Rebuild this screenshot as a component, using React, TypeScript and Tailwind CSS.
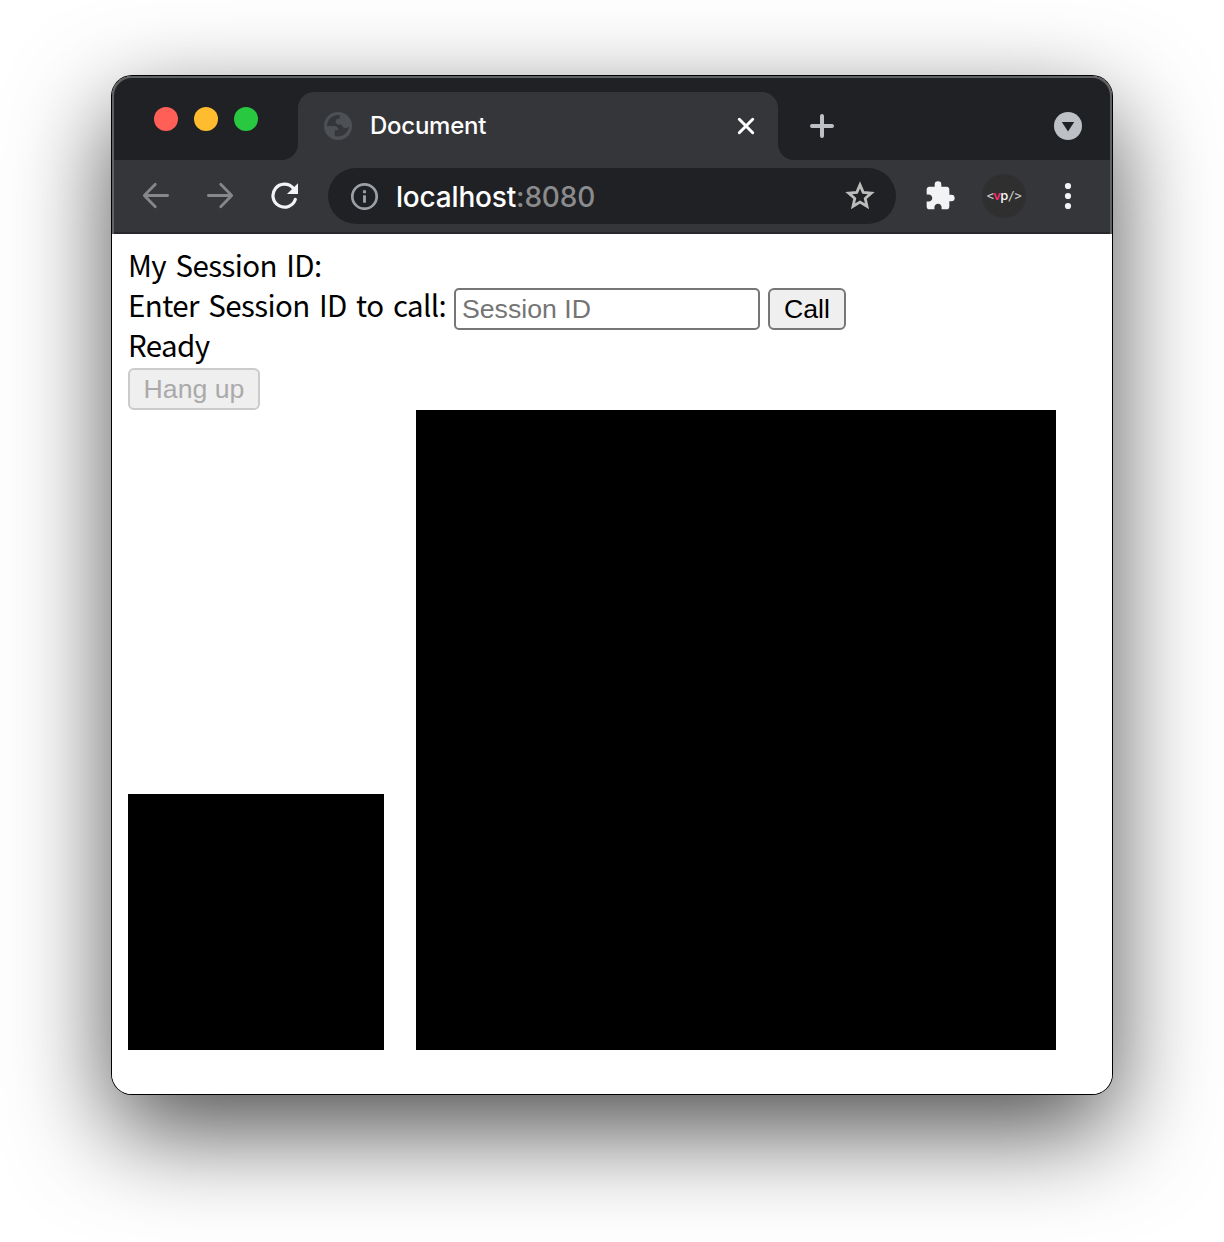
import React from "react";

function TabStrip() {
  return (
    <div className="flex h-[84px] bg-[#202124] pl-[42px] pr-[30px]">
      <div className="flex gap-4 pt-[31px]">
        <span className="h-6 w-6 rounded-full bg-[#ff5f57]" />
        <span className="h-6 w-6 rounded-full bg-[#febc2e]" />
        <span className="h-6 w-6 rounded-full bg-[#28c840]" />
      </div>
      <div className="relative ml-10 mt-4 flex h-[68px] w-[480px] items-center rounded-t-2xl bg-[#35363a] pl-[26px]">
        <svg className="absolute bottom-0 -left-4 h-4 w-4" viewBox="0 0 16 16">
          <path d="M16 0v16H0A16 16 0 0 0 16 0z" fill="#35363a" />
        </svg>
        <svg className="absolute bottom-0 -right-4 h-4 w-4" viewBox="0 0 16 16">
          <path d="M0 0v16h16A16 16 0 0 1 0 0z" fill="#35363a" />
        </svg>
        <svg className="h-7 w-7" viewBox="0 0 28 28">
          <circle cx="14" cy="14" r="14" fill="#4d5156" />
          <path
            d="M3 14H9.500c3.300 0 4.800 1.500 4.800 4.200H10.800v5.800A11 11 0 0 0 25 14.200c-.8 1.300-1.900 1.900-3.500 1.900-2.800 0-3.500-1.400-3.700-3.300-3.500 0-6.200-.6-6.200-3 0-2.600 1.500-3.400 4.100-3.400V3.100A11 11 0 0 0 3 14z"
            fill="#35363a"
          />
        </svg>
        <span className="ml-[18px] whitespace-nowrap font-['Inter'] text-[24px] font-[450] leading-8 tracking-[-0.25px] text-white">Document</span>
        <svg className="absolute right-[22px] top-[24px] h-5 w-5" viewBox="0 0 20 20" fill="none" stroke="#fff" strokeWidth="3" strokeLinecap="round">
          <path d="M3.300 3.300l13.400 13.400M16.700 3.300L3.300 16.700" />
        </svg>
      </div>
      <svg className="ml-8 mt-[38px] h-6 w-6" viewBox="0 0 24 24" fill="none" stroke="#bdc1c6" strokeWidth="4" strokeLinecap="round">
        <path d="M2 12h20M12 2v20" />
      </svg>
      <svg className="ml-auto mt-9 h-7 w-7" viewBox="0 0 28 28">
        <circle cx="14" cy="14" r="14" fill="#bdc1c6" />
        <path d="M7.800 10h12.400L14 19.600z" fill="#202124" />
      </svg>
    </div>
  );
}

function Toolbar() {
  return (
    <div className="flex h-[74px] border-b-2 border-[#28292c] bg-[#35363a] pt-2">
      <div className="flex h-14 w-[216px] items-center gap-9 pl-[30px]">
        <svg className="h-7 w-7" viewBox="0 0 28 28" fill="none" stroke="#868789" strokeWidth="2.800" strokeLinecap="round" strokeLinejoin="round">
          <path d="M25.600 13.500H2.500M13.300 2.300L2.300 13.500l11 11.200" />
        </svg>
        <svg className="h-7 w-7" viewBox="0 0 28 28" fill="none" stroke="#868789" strokeWidth="2.800" strokeLinecap="round" strokeLinejoin="round">
          <path d="M2.400 13.500H25.500M14.700 2.300l11 11.200-11 11.200" />
        </svg>
        <svg className="h-7 w-7" viewBox="0 0 28 28" fill="none">
          <path d="M25.300 17.500A11.500 11.500 0 1 1 23 5.900" stroke="#f1f3f4" strokeWidth="3.200" strokeLinecap="round" />
          <path d="M28.300 1v11H17z" fill="#f1f3f4" />
        </svg>
      </div>
      <div className="flex h-14 w-[568px] items-center rounded-full bg-[#202124] pl-[22px] pr-5">
        <svg className="h-7 w-7" viewBox="0 0 28 28" fill="none">
          <circle cx="14.500" cy="14.500" r="12.200" stroke="#9aa0a6" strokeWidth="2.700" />
          <path d="M14.500 13.200v7.600M14.500 8.200v3" stroke="#9aa0a6" strokeWidth="2.900" />
        </svg>
        <span className="ml-[18px] whitespace-nowrap pt-px font-['Inter'] text-[28px] font-[450] leading-8 tracking-[-0.18px] text-white">
          localhost<span className="text-[#8a8b8d]">:8080</span>
        </span>
        <svg className="ml-auto h-8 w-8" viewBox="0 0 32 32" fill="none" stroke="#bcbcbc" strokeWidth="2.800">
          <path d="M16 4.900l3.200 7.500 8.100.7-6.100 5.300 1.800 7.900-7-4.200-7 4.200 1.800-7.900-6.100-5.300 8.100-.7z" />
        </svg>
      </div>
      <svg className="ml-[28px] mt-3 h-8 w-8" viewBox="0 0 24 24" fill="#f1f3f4">
        <path d="M20.500 11H19V7c0-1.100-.9-2-2-2h-4V3.500a2.500 2.500 0 0 0-5 0V5H4c-1.100 0-1.990.9-1.990 2v3.800H3.500c1.490 0 2.700 1.210 2.700 2.700s-1.210 2.700-2.700 2.700H2V20c0 1.100.9 2 2 2h3.800v-1.500c0-1.490 1.210-2.700 2.700-2.700s2.700 1.210 2.700 2.700V22H17c1.100 0 2-.9 2-2v-4h1.500a2.500 2.500 0 0 0 0-5z" />
      </svg>
      <span className="ml-[26px] mt-[6px] flex h-11 w-11 items-center justify-center rounded-full bg-[#2f2f2f] pb-px font-['DejaVu_Sans_Mono'] text-[12px] leading-none tracking-[-0.5px] text-[#d0d0d0]">
        &lt;<span className="font-['Noto_Sans'] text-[13px] font-semibold text-[#ff2a6d]">v</span>
        <span className="font-['Noto_Sans'] text-[13px] font-medium text-white">p</span>/&gt;
      </span>
      <svg className="ml-[38px] mt-[14px] h-7 w-2" viewBox="0 0 8 28" fill="#f1f3f4">
        <circle cx="4" cy="4" r="3.100" />
        <circle cx="4" cy="14" r="3.100" />
        <circle cx="4" cy="24" r="3.100" />
      </svg>
    </div>
  );
}

const pageText =
  "whitespace-nowrap font-['Noto_Sans_CJK_KR',sans-serif] text-[29.5px] leading-9 tracking-[-0.6px] [word-spacing:3.4px]";

function Page() {
  return (
    <div className="px-4 pt-3 text-black">
      <div className={`h-10 ${pageText}`}>My Session ID:</div>
      <div className="flex h-10">
        <span className={`w-[326px] ${pageText}`}>Enter Session ID to call:</span>
        <input
          placeholder="Session ID"
          className="mt-[2px] h-[42px] w-[306px] rounded-[5px] border-2 border-[#767676] bg-white px-[6px] font-['Liberation_Sans'] text-[26.670px] placeholder:text-[#757575]"
        />
        <button className="ml-2 mt-[2px] h-[42px] w-[78px] rounded-[6px] border-2 border-[#767676] bg-[#efefef] font-['Liberation_Sans'] text-[26.670px] leading-[38px]">Call</button>
      </div>
      <div className={`h-10 ${pageText}`}>Ready</div>
      <button disabled className="mt-[2px] block h-[42px] w-[132px] whitespace-nowrap rounded-[6px] border-2 border-[#cbcbcb] bg-[#efefef] font-['Liberation_Sans'] text-[26.670px] leading-[38px] text-[#aaaaaa]">
        Hang up
      </button>
      <div className="flex items-end gap-8">
        <div className="h-64 w-64 bg-black" />
        <div className="h-[640px] w-[640px] bg-black" />
      </div>
    </div>
  );
}

export default function App() {
  return (
    <div className="h-[1242px] w-[1224px] overflow-hidden bg-white px-28 pt-[76px]">
      <div className="h-[1018px] w-[1000px] rounded-[20px] shadow-[0_0_0_1px_#000,0_36px_100px_rgba(0,0,0,0.7)]">
        <div className="relative h-full overflow-hidden rounded-[20px] bg-white">
          <TabStrip />
          <Toolbar />
          <Page />
          <div className="pointer-events-none absolute inset-x-0 top-0 h-[158px] overflow-hidden">
            <div className="h-[200px] rounded-[20px] border-2 border-[#606163]" />
          </div>
        </div>
      </div>
    </div>
  );
}
